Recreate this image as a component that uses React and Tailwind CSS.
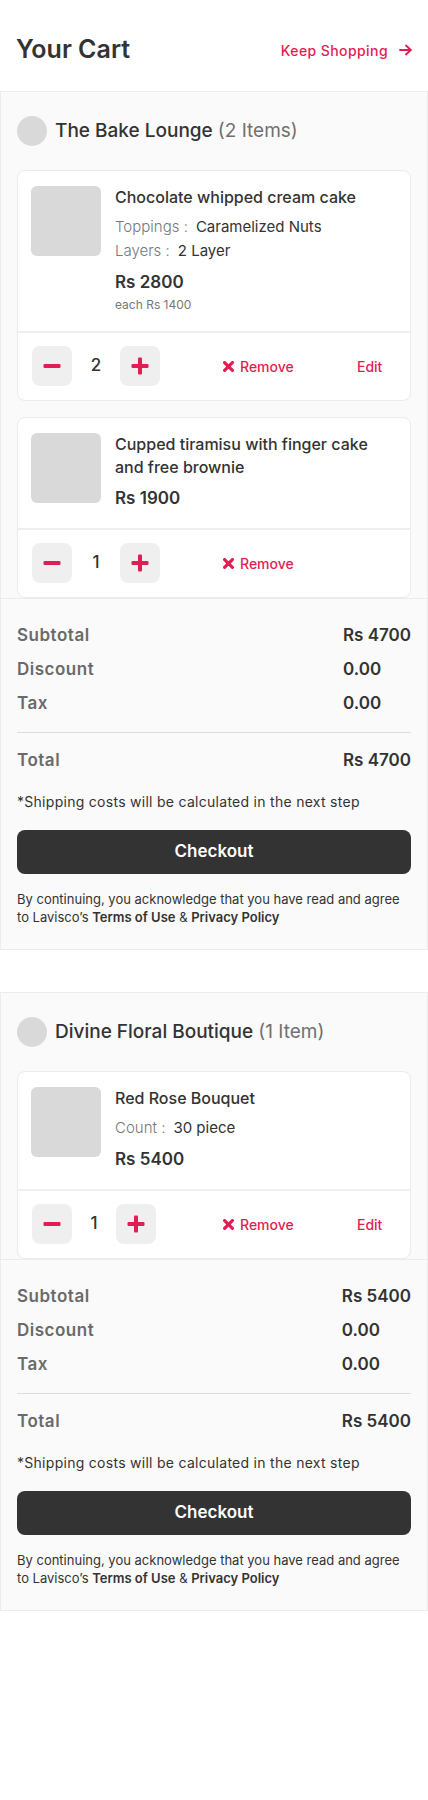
const RED = 'text-[#E11D55]'

const STORES = [
  {
    name: 'The Bake Lounge',
    count: '(2 Items)',
    items: [
      {
        title: ['Chocolate whipped cream cake'],
        options: [['Toppings', 'Caramelized Nuts'], ['Layers', '2 Layer']],
        price: 'Rs 2800',
        each: 'each Rs 1400',
        qty: 2,
        edit: true,
      },
      {
        title: ['Cupped tiramisu with finger cake', 'and free brownie'],
        options: [],
        price: 'Rs 1900',
        qty: 1,
        edit: false,
      },
    ],
    subtotal: 'Rs 4700',
    total: 'Rs 4700',
  },
  {
    name: 'Divine Floral Boutique',
    count: '(1 Item)',
    items: [
      {
        title: ['Red Rose Bouquet'],
        options: [['Count', '30 piece']],
        price: 'Rs 5400',
        qty: 1,
        edit: true,
        narrow: true,
      },
    ],
    subtotal: 'Rs 5400',
    total: 'Rs 5400',
  },
]

function Minus() {
  return (
    <svg width="18" height="18" viewBox="0 0 18 18">
      <rect x="0.5" y="7" width="17" height="4" rx="1" fill="#E11D55" />
    </svg>
  )
}

function Plus() {
  return (
    <svg width="18" height="18" viewBox="0 0 18 18">
      <rect x="0.5" y="7" width="17" height="4" rx="1" fill="#E11D55" />
      <rect x="7" y="0.5" width="4" height="17" rx="1" fill="#E11D55" />
    </svg>
  )
}

function Cross() {
  return (
    <svg width="11" height="11" viewBox="0 0 11 11">
      <path d="M1.6 1.6l7.8 7.8M9.4 1.6l-7.8 7.8" stroke="#E11D55" strokeWidth="3.2" strokeLinecap="round" />
    </svg>
  )
}

function ItemCard({ item }) {
  return (
    <div className="bg-white border border-[#ebebeb] rounded-lg">
      <div className="flex gap-[14px] px-[13px] pt-[15px] pb-[18px]">
        <div className="w-[70px] h-[70px] rounded-md bg-[#d9d9d9] flex-shrink-0" />
        <div className="flex flex-col">
          {item.title.map(t => (
            <div key={t} className="text-[16px] leading-[23px] font-medium text-[#333] whitespace-nowrap">{t}</div>
          ))}
          {item.options.map(([k, v], i) => (
            <div key={k} className={(i === 0 ? 'mt-[6px] ' : '') + 'text-[15px] leading-[24px]'}>
              <span className="text-[#777] font-light">{k} :</span>
              <span className="text-[#333] ml-2">{v}</span>
            </div>
          ))}
          <div className="mt-[7px] text-[17px] leading-[24px] font-semibold text-[#333]">{item.price}</div>
          {item.each && (
            <div className="mt-[3px] text-[12px] leading-[16px] text-[#777]">{item.each}</div>
          )}
        </div>
      </div>
      <div className="border-t-2 border-[#efefef] flex items-center px-[14px] pt-[13px] pb-[14px]">
        <div className="w-[128px] flex items-center">
          <button className="w-10 h-10 rounded-lg bg-[#efefef] flex items-center justify-center"><Minus /></button>
          <span className={(item.narrow ? 'w-11' : 'w-12') + ' text-center text-[17px] font-medium text-[#333]'}>{item.qty}</span>
          <button className="w-10 h-10 rounded-lg bg-[#efefef] flex items-center justify-center"><Plus /></button>
        </div>
        <div className={'ml-[63px] w-[134px] flex items-center gap-[6px] text-[14px] font-medium ' + RED}>
          <Cross />
          Remove
        </div>
        {item.edit && <div className={'text-[14px] font-medium ' + RED}>Edit</div>}
      </div>
    </div>
  )
}

function Row({ label, value }) {
  return (
    <div className="grid grid-cols-[1fr_auto] h-[34px] items-center">
      <span className="text-[17px] tracking-[0.03em] font-semibold text-[#6a6a6a]">{label}</span>
      <span className="text-[17px] font-semibold text-[#333]">{value}</span>
    </div>
  )
}

function StoreSection({ store, className }) {
  return (
    <section className={'bg-[#fafafa] border border-[#ececec] ' + className}>
      <div className="px-4 pt-6 flex items-center gap-2">
        <div className="w-[30px] h-[30px] rounded-full bg-[#d9d9d9]" />
        <div className="text-[19px] font-medium text-[#333]">
          {store.name} <span className="text-[#707070] font-normal">{store.count}</span>
        </div>
      </div>
      <div className="px-4 mt-6 flex flex-col gap-[16px]">
        {store.items.map(it => <ItemCard key={it.title[0]} item={it} />)}
      </div>
      <div className="border-t border-[#ececec] px-4 pt-5 pb-[23px]">
        <div className="grid grid-cols-[1fr_auto]">
          {[['Subtotal', store.subtotal], ['Discount', '0.00'], ['Tax', '0.00']].map(([l, v]) => (
            <div key={l} className="contents">
              <span className="h-[34px] flex items-center text-[17px] tracking-[0.03em] font-semibold text-[#6a6a6a]">{l}</span>
              <span className="h-[34px] flex items-center text-[17px] font-semibold text-[#333]">{v}</span>
            </div>
          ))}
        </div>
        <div className="mt-[11px] border-t border-[#dcdcdc]" />
        <div className="mt-[11px]">
          <Row label="Total" value={store.total} />
        </div>
        <p className="mt-[14px] text-[14px] tracking-[0.02em] leading-[20px] text-[#333]">*Shipping costs will be calculated in the next step</p>
        <button className="mt-[18px] w-full h-11 rounded-lg bg-[#333] text-white text-[17px] font-semibold">Checkout</button>
        <p className="mt-4 text-[13px] leading-[18px] text-[#333]">
          By continuing, you acknowledge that you have read and agree to Lavisco’s{' '}
          <span className="font-semibold">Terms of Use</span> &amp; <span className="font-semibold">Privacy Policy</span>
        </p>
      </div>
    </section>
  )
}

export default function App() {
  return (
    <div className="w-[428px] min-h-[1800px] bg-white font-['Inter',sans-serif]">
      <header className="h-[91px] px-4 pt-[9px] flex items-center justify-between">
        <h1 className="text-[25px] font-semibold text-[#333]">Your Cart</h1>
        <a className={'flex items-center gap-[11px] text-[14px] tracking-[0.03em] font-medium ' + RED}>
          Keep Shopping
          <svg width="13" height="12" viewBox="0 0 13 12" fill="none" stroke="#E11D55" strokeWidth="1.8" strokeLinecap="round" strokeLinejoin="round">
            <path d="M1 6h11M7 1.5L11.8 6 7 10.5" />
          </svg>
        </a>
      </header>
      <StoreSection store={STORES[0]} className="" />
      <StoreSection store={STORES[1]} className="mt-[42px]" />
    </div>
  )
}
